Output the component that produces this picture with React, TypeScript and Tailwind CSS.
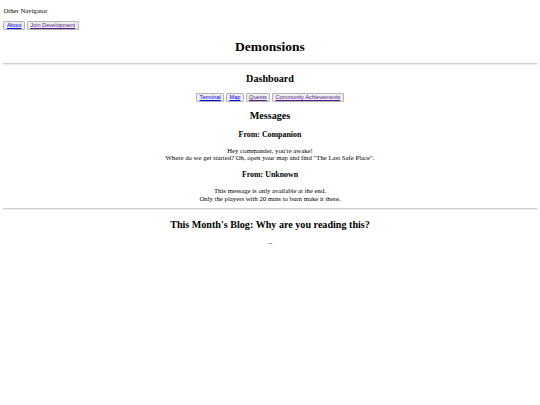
import React from 'react';

// page is a default-styled document shown at 540/1280 scale, so every size is scaled by 0.421875

const NavButton = ({ label, visited }: { label: string; visited?: boolean }) => (
  <button className="inline-block align-baseline bg-[#efefef] border border-[#b4b4b4] rounded-[1px] px-[2.5px] py-[0.5px] leading-[normal] text-[5.625px] font-['Liberation_Sans',Arial,sans-serif]">
    <a
      href="#"
      className={`underline ${visited ? 'text-[#551a8b]' : 'text-[#0000ee]'}`}
    >
      {label}
    </a>
  </button>
);

const Rule = () => (
  <hr className="mt-[2.3px] mb-[2.6px] h-[2px] border-0 border-t border-[#cfcfcf] bg-[#ececec]" />
);

export default function App() {
  return (
    <div className="bg-white text-black min-h-[405px] px-[3.375px] pt-px pb-[3.375px] font-['Liberation_Serif','Times_New_Roman',serif] text-[6.75px] leading-[normal]">
      <p className="mt-[5.75px] mb-[6.75px]">Other Navigator</p>
      <p className="flex gap-[1.7px] my-[6.75px]">
        <NavButton label="About" />
        <NavButton label="Join Development" visited />
      </p>

      <h1 className="text-center text-[13.5px] font-bold mt-[9.05px] mb-[8.5px]">Demonsions</h1>
      <Rule />

      <h2 className="text-center text-[10.125px] font-bold my-[8.4px]">Dashboard</h2>
      <p className="flex justify-center gap-[1.7px] my-[6.75px]">
        <NavButton label="Terminal" />
        <NavButton label="Map" />
        <NavButton label="Quests" visited />
        <NavButton label="Community Achievements" visited />
      </p>

      <h2 className="text-center text-[10.125px] font-bold my-[8.4px]">Messages</h2>

      <h3 className="text-center text-[7.9px] font-bold my-[8.1px]">From: Companion</h3>
      <p className="text-center my-[6.75px] leading-[7.7px]">
        Hey commander, you're awake!
        <br />
        Where do we get started? Oh, open your map and find "The Last Safe Place".
      </p>

      <h3 className="text-center text-[7.9px] font-bold my-[8.1px]">From: Unknown</h3>
      <p className="text-center mt-[6.75px] mb-[5.75px] leading-[7.7px]">
        This message is only available at the end.
        <br />
        Only the players with 20 mins to burn make it there.
      </p>

      <Rule />

      <h2 className="text-center text-[10.125px] font-bold my-[8.4px]">This Month's Blog: Why are you reading this?</h2>
      <p className="text-center my-[6.75px]">...</p>
    </div>
  );
}
